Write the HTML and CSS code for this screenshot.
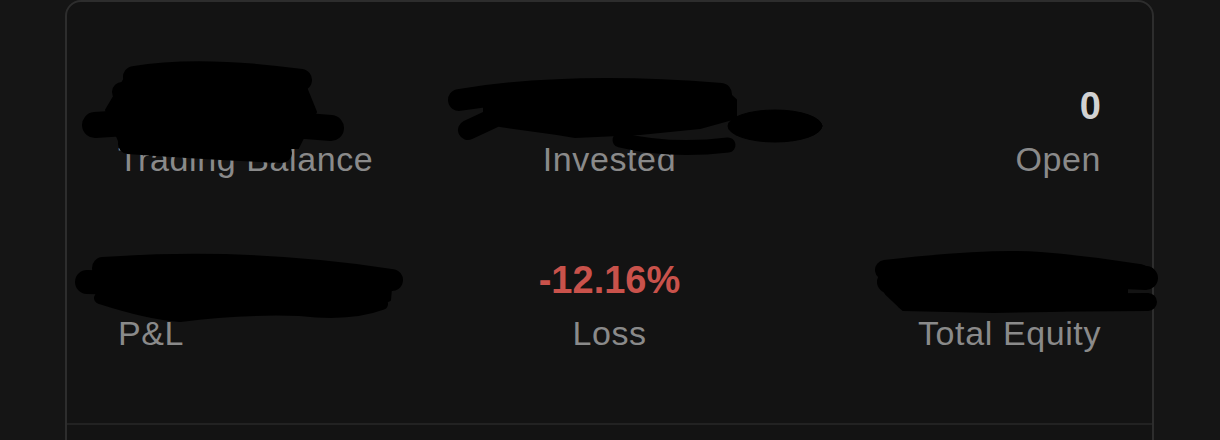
FILE: index.html
```html
<!DOCTYPE html>
<html lang="en">
<head>
<meta charset="utf-8">
<title>Portfolio summary</title>
<link rel="stylesheet" href="styles.css">
</head>
<body>
<div class="card">
  <svg class="redactions" width="1089" height="440" viewBox="65 0 1089 440" aria-hidden="true">
    <g fill="#000" stroke="#000" stroke-linecap="round" stroke-linejoin="round">
      <!-- Trading Balance -->
      <path d="M134,77 Q200,66 301,80" fill="none" stroke-width="22"/>
      <path d="M122,92 L298,96" fill="none" stroke-width="20"/>
      <path d="M95,125 Q200,116 331,128" fill="none" stroke-width="26"/>
      <path d="M128,144 Q210,150 282,153" fill="none" stroke-width="20"/>
      <polygon points="125,78 303,80 316,112 298,148 122,148 106,110" stroke-width="2"/>
      <!-- Invested -->
      <path d="M459,100 C520,90 600,84 721,94" fill="none" stroke-width="22"/>
      <path d="M468,130 L498,116" fill="none" stroke-width="20"/>
      <polygon points="484,96 600,86 723,88 736,100 736,118 700,128 640,134 575,137 557,134 500,126 484,112" stroke-width="2"/>
      <ellipse cx="775" cy="126" rx="47" ry="16"/>
      <path d="M620,140 Q670,152 728,145" fill="none" stroke-width="15"/>
      <!-- P&L -->
      <path d="M103,268 Q250,258 392,280" fill="none" stroke-width="22"/>
      <path d="M87,282 L200,285" fill="none" stroke-width="24"/>
      <polygon points="100,268 392,278 390,300 360,314 293,309 210,314 177,316 143,308 98,296" stroke-width="2"/>
      <path d="M100,298 Q150,314 180,316 Q240,308 300,310 Q350,316 382,304" fill="none" stroke-width="12"/>
      <!-- Total Equity -->
      <path d="M885,270 Q990,258 1040,262 Q1090,266 1140,274" fill="none" stroke-width="20"/>
      <path d="M1100,276 L1146,278" fill="none" stroke-width="24"/>
      <path d="M888,282 L960,282" fill="none" stroke-width="22"/>
      <path d="M905,301 L1000,303 L1148,302" fill="none" stroke-width="18"/>
      <polygon points="884,270 1127,272 1127,306 1050,311 993,312 903,310 886,294 878,282" stroke-width="2"/>
    </g>
  </svg>

  <section class="stats">
    <div class="stat stat-start">
      <div class="value"></div>
      <div class="label">Trading Balance</div>
    </div>
    <div class="stat stat-center">
      <div class="value"></div>
      <div class="label">Invested</div>
    </div>
    <div class="stat stat-end">
      <div class="value">0</div>
      <div class="label">Open</div>
    </div>
    <div class="stat stat-start">
      <div class="value"></div>
      <div class="label">P&amp;L</div>
    </div>
    <div class="stat stat-center">
      <div class="value value-loss">-12.16%</div>
      <div class="label">Loss</div>
    </div>
    <div class="stat stat-end">
      <div class="value"></div>
      <div class="label">Total Equity</div>
    </div>
  </section>
  <div class="card-foot"></div>
</div>
</body>
</html>
```

FILE: styles.css
```css
html, body {
  margin: 0;
  padding: 0;
  height: 100%;
  overflow: hidden;
}

body {
  background: #151515;
  font-family: "Liberation Sans", Arial, sans-serif;
}

.card {
  position: relative;
  box-sizing: border-box;
  width: 1089px;
  margin-left: 65px;
  background: #131313;
  border: 2px solid #2d2d2d;
  border-radius: 16px;
}

.redactions {
  position: absolute;
  top: -2px;
  left: -2px;
  overflow: visible;
  pointer-events: none;
}

.stats {
  display: grid;
  grid-template-columns: repeat(3, 1fr);
  row-gap: 79px;
  padding: 82px 51px 70px;
  border-bottom: 2px solid #222222;
}

.stat {
  display: flex;
  flex-direction: column;
  gap: 11px;
}

.stat-start { align-items: flex-start; }
.stat-center { align-items: center; }
.stat-end { align-items: flex-end; }

.value {
  height: 44px;
  font-size: 38px;
  line-height: 44px;
  font-weight: 700;
  color: #d2d2d2;
}

.value-loss {
  color: #c9524b;
}

.label {
  font-size: 34px;
  line-height: 40px;
  letter-spacing: 0.6px;
  color: #8a8a8a;
}

.card-foot {
  height: 60px;
}
```
